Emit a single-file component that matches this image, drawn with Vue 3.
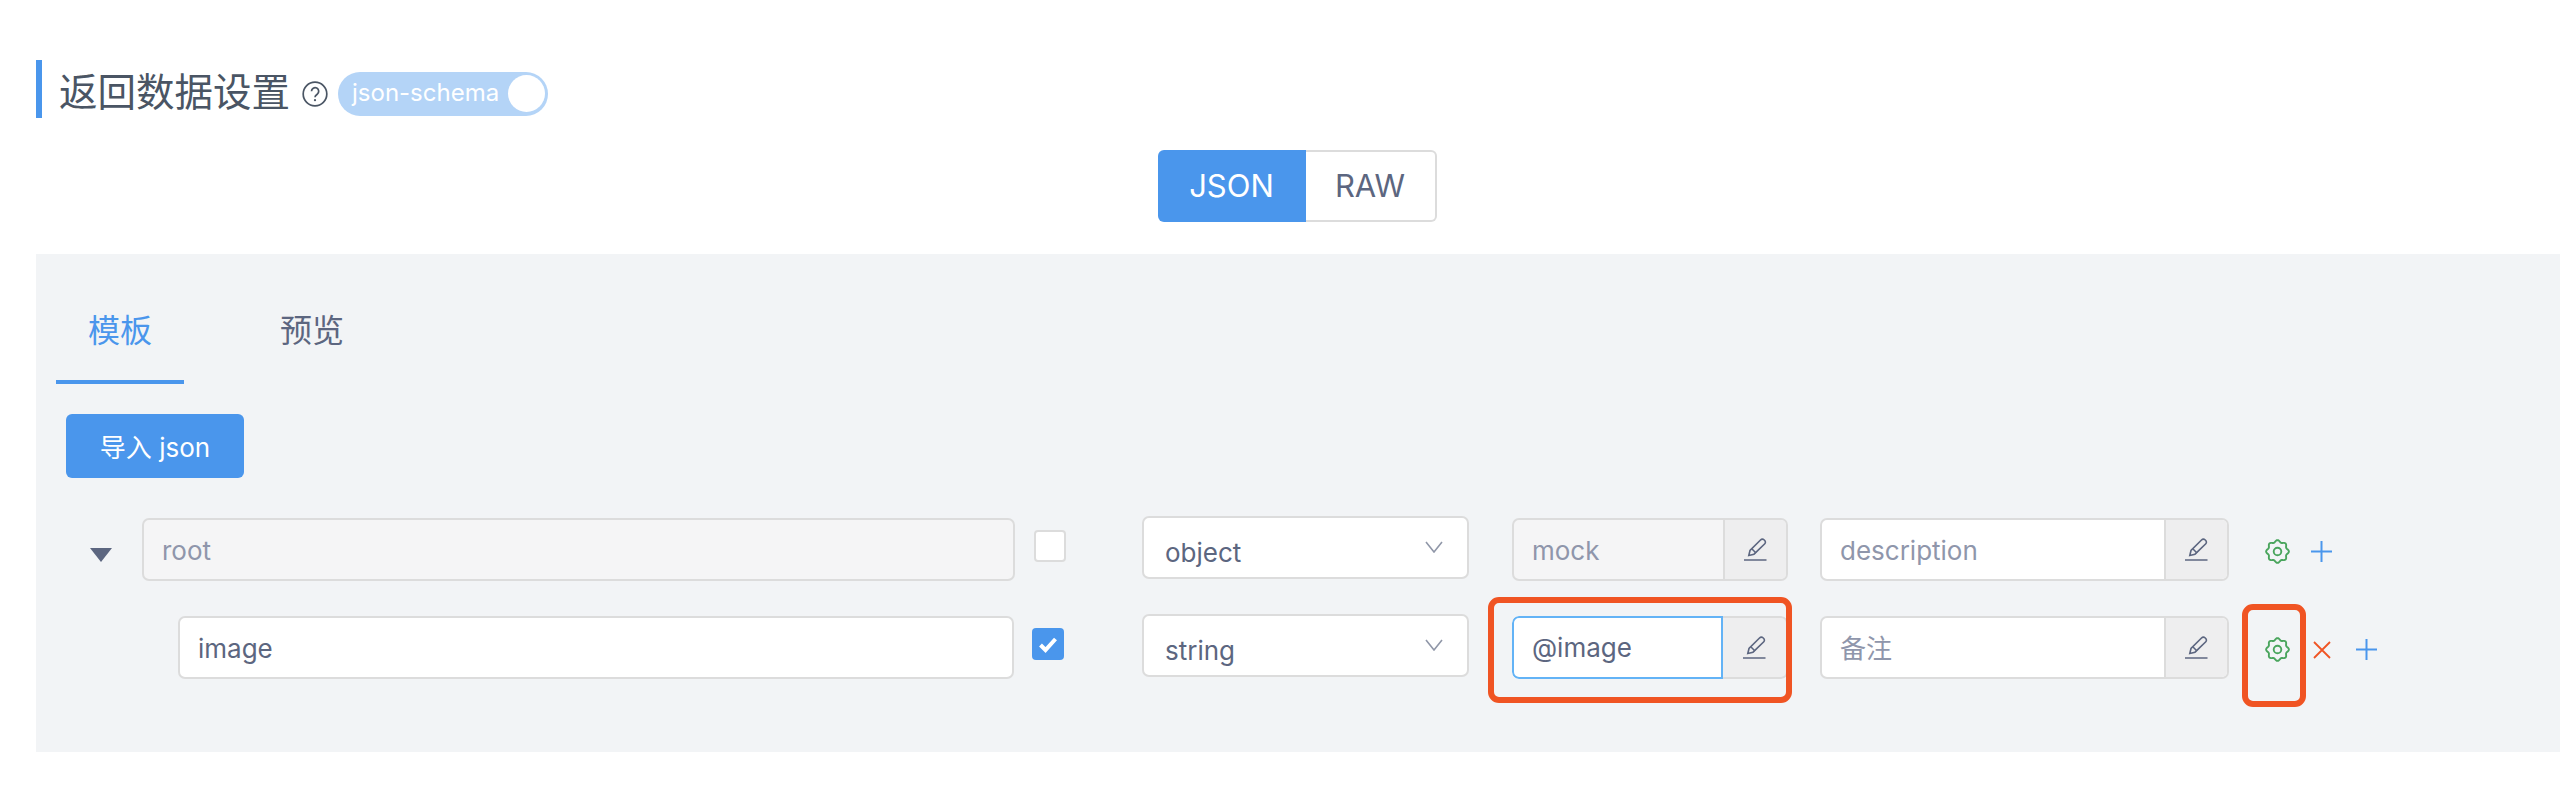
<script setup>
const lobes = 8
const pts = []
for (let i = 0; i < 96; i++) {
  const t = (i / 96) * Math.PI * 2
  const r = 10.4 + 1 * Math.cos(lobes * t)
  pts.push(`${(12.5 + r * Math.sin(t)).toFixed(2)} ${(12.5 - r * Math.cos(t)).toFixed(2)}`)
}
const gearPath = 'M' + pts.join('L') + 'Z'
</script>

<template>
  <div class="page">
    <div class="heading">
      <h2 class="title">返回数据设置</h2>
      <svg class="help" viewBox="0 0 26 26" aria-hidden="true">
        <circle cx="13" cy="13" r="11.8" />
        <path d="M9.5 10.2a3.6 3.6 0 1 1 5.7 3c-1.3.9-2.2 1.6-2.2 3.1" />
        <circle class="dot" cx="13" cy="19.2" r="1.1" />
      </svg>
      <div class="switch">
        <span class="switch-text">json-schema</span>
        <span class="knob"></span>
      </div>
    </div>

    <div class="segment-wrap">
      <div class="segment">
        <span class="seg seg-on">JSON</span>
        <span class="seg seg-off">RAW</span>
      </div>
    </div>

    <section class="panel">
      <div class="tabs">
        <span class="tab tab-active">模板</span>
        <span class="tab">预览</span>
      </div>
      <button class="import">导入 json</button>

      <div class="row row-root">
        <span class="caret"></span>
        <div class="field field-root disabled"><span class="ph">root</span></div>
        <span class="check"></span>
        <div class="select">
          <span>object</span>
          <svg class="chev" viewBox="0 0 18 12"><path d="M1 1l8 10 8-10" /></svg>
        </div>
        <div class="group group-mock disabled">
          <span class="group-text ph">mock</span>
          <span class="addon">
            <svg class="pen" viewBox="0 0 23 23"><path d="M4.8 17.5l1.2-5L16.5 2c1-1 2.6-1 3.8 0s1.5 2.8.5 3.8L10 16.2z" /><path d="M8 11l4 4" /><path d="M0 22h22.5" /></svg>
          </span>
        </div>
        <div class="group group-desc">
          <span class="group-text ph">description</span>
          <span class="addon">
            <svg class="pen" viewBox="0 0 23 23"><path d="M4.8 17.5l1.2-5L16.5 2c1-1 2.6-1 3.8 0s1.5 2.8.5 3.8L10 16.2z" /><path d="M8 11l4 4" /><path d="M0 22h22.5" /></svg>
          </span>
        </div>
        <svg class="gear" viewBox="0 0 25 25"><path :d="gearPath" /><circle cx="12.5" cy="12.5" r="3.8" /></svg>
        <svg class="plus plus-root" viewBox="0 0 21 21"><path d="M10.5 0v21M0 10.5h21" /></svg>
      </div>

      <div class="row row-child">
        <div class="field field-child"><span>image</span></div>
        <span class="check check-on">
          <svg viewBox="0 0 32 32"><path d="M8.5 17l5 5 10-11" /></svg>
        </span>
        <div class="select">
          <span>string</span>
          <svg class="chev" viewBox="0 0 18 12"><path d="M1 1l8 10 8-10" /></svg>
        </div>
        <div class="group group-mock group-focus">
          <span class="group-text focused">@image</span>
          <span class="addon">
            <svg class="pen" viewBox="0 0 23 23"><path d="M4.8 17.5l1.2-5L16.5 2c1-1 2.6-1 3.8 0s1.5 2.8.5 3.8L10 16.2z" /><path d="M8 11l4 4" /><path d="M0 22h22.5" /></svg>
          </span>
        </div>
        <div class="group group-desc">
          <span class="group-text ph">备注</span>
          <span class="addon">
            <svg class="pen" viewBox="0 0 23 23"><path d="M4.8 17.5l1.2-5L16.5 2c1-1 2.6-1 3.8 0s1.5 2.8.5 3.8L10 16.2z" /><path d="M8 11l4 4" /><path d="M0 22h22.5" /></svg>
          </span>
        </div>
        <svg class="gear" viewBox="0 0 25 25"><path :d="gearPath" /><circle cx="12.5" cy="12.5" r="3.8" /></svg>
        <svg class="close" viewBox="0 0 18 18"><path d="M1 1l16 16M17 1L1 17" /></svg>
        <svg class="plus plus-child" viewBox="0 0 21 21"><path d="M10.5 0v21M0 10.5h21" /></svg>
      </div>

      <span class="mark mark-mock"></span>
      <span class="mark mark-gear"></span>
    </section>
  </div>
</template>

<style>
html, body { margin: 0; background: #fff; }
</style>

<style scoped>
.page {
  width: 2572px;
  height: 808px;
  overflow: hidden;
  padding-top: 60px;
  box-sizing: border-box;
  font-family: Inter, "Noto Sans CJK SC", sans-serif;
  color: #5c6680;
}
.heading {
  display: flex;
  align-items: center;
  height: 58px;
  margin-left: 36px;
  padding-left: 17px;
  border-left: 6px solid #4a96ec;
}
.title {
  margin: 0;
  font-size: 38.5px;
  line-height: 58px;
  font-weight: 400;
  color: #4a5564;
  font-family: "Noto Sans CJK SC", sans-serif;
}
.help {
  width: 26px;
  height: 26px;
  margin-left: 12px;
  margin-top: 10px;
  fill: none;
  stroke: #4a5564;
  stroke-width: 1.7;
}
.help .dot { fill: #4a5564; stroke: none; }
.switch {
  position: relative;
  width: 210px;
  height: 44px;
  margin-left: 10px;
  margin-top: 10px;
  border-radius: 22px;
  background: #b4d4f7;
}
.switch-text {
  position: absolute;
  left: 14px;
  top: 0;
  line-height: 42px;
  font-size: 24px;
  color: #fff;
}
.knob {
  position: absolute;
  right: 3px;
  top: 3px;
  width: 37px;
  height: 37px;
  border-radius: 50%;
  background: #fff;
}
.segment-wrap {
  display: flex;
  justify-content: center;
  margin-top: 32px;
  padding-left: 22px;
}
.segment {
  display: flex;
  height: 72px;
  width: 279px;
  box-sizing: border-box;
  font-size: 31px;
  line-height: 72px;
}
.seg { text-align: center; box-sizing: border-box; }
.seg-on {
  width: 148px;
  background: #4a96ec;
  color: #fff;
  border-radius: 6px 0 0 6px;
}
.seg-off {
  width: 131px;
  background: #fff;
  border: 2px solid #dcdcdc;
  border-left: 0;
  line-height: 68px;
  border-radius: 0 6px 6px 0;
}
.panel {
  position: relative;
  margin: 32px 0 0 36px;
  width: 2524px;
  height: 498px;
  padding-top: 52px;
  box-sizing: border-box;
  background: #f2f4f6;
}
.tabs { display: flex; margin-left: 20px; gap: 64px; }
.tab {
  width: 128px;
  height: 74px;
  text-align: center;
  font-size: 32px;
  line-height: 44px;
  font-family: "Noto Sans CJK SC", sans-serif;
}
.tab-active { color: #4a96ec; border-bottom: 4px solid #4a96ec; }
.import {
  display: block;
  width: 178px;
  height: 64px;
  margin: 30px 0 0 30px;
  padding: 0 0 2px;
  border: 0;
  border-radius: 6px;
  background: #4a96ec;
  color: #fff;
  font: 26px Inter, "Noto Sans CJK SC", sans-serif;
}
.row { display: flex; align-items: flex-start; height: 98px; }
.row-root { margin-top: 38px; }
.caret {
  width: 0;
  height: 0;
  margin: 32px 0 0 54px;
  border-left: 11px solid transparent;
  border-right: 11px solid transparent;
  border-top: 14px solid #5c6680;
}
.field, .select, .group {
  box-sizing: border-box;
  height: 63px;
  border: 2px solid #dcdcdc;
  border-radius: 7px;
  background: #fff;
  font-size: 26px;
}
.field { margin-top: 2px; padding-left: 18px; line-height: 62px; }
.field-root { margin-left: 30px; width: 873px; }
.field-child { margin-left: 142px; width: 836px; }
.disabled { background: #f5f5f6; }
.ph { color: #8f96ab; }
.check {
  box-sizing: border-box;
  width: 32px;
  height: 32px;
  margin: 14px 0 0 19px;
  border: 2px solid #dcdcdc;
  border-radius: 4px;
  background: #fff;
}
.check-on {
  margin-left: 18px;
  border: 0;
  background: #4a96ec;
}
.check-on svg {
  display: block;
  fill: none;
  stroke: #fff;
  stroke-width: 4;
}
.select {
  position: relative;
  width: 327px;
  margin-left: 76px;
  padding: 13px 0 0 21px;
  line-height: 44px;
}
.row-child .select { margin-left: 78px; }
.chev {
  position: absolute;
  right: 24px;
  top: 23px;
  width: 18px;
  height: 12px;
  fill: none;
  stroke: #9097a8;
  stroke-width: 1.6;
}
.group {
  display: flex;
  margin-top: 2px;
  overflow: hidden;
  line-height: 62px;
}
.group-mock { margin-left: 43px; width: 276px; }
.group-desc { margin-left: 32px; width: 409px; }
.group-text {
  flex: 1;
  min-width: 0;
  padding-left: 18px;
}
.addon {
  display: flex;
  flex: none;
  align-items: center;
  justify-content: center;
  width: 63px;
  box-sizing: border-box;
  border-left: 2px solid #dcdcdc;
  background: #eeeeef;
}
.group-focus {
  border: 0;
  background: transparent;
}
.group-focus .focused {
  box-sizing: border-box;
  padding-left: 18px;
  line-height: 60px;
  border: 2px solid #63b3f6;
  border-radius: 7px 0 0 7px;
  background: #fff;
}
.group-focus .addon {
  width: 65px;
  border: 2px solid #dcdcdc;
  border-left: 0;
  border-radius: 0 7px 7px 0;
}
.pen {
  width: 23px;
  height: 23px;
  fill: none;
  stroke: #5c6680;
  stroke-width: 1.6;
}
.gear {
  width: 25px;
  height: 25px;
  margin: 23px 0 0 36px;
  fill: none;
  stroke: #4aa55d;
  stroke-width: 1.9;
}
.plus {
  width: 21px;
  height: 21px;
  margin-top: 25px;
  fill: none;
  stroke: #4a96ec;
  stroke-width: 2;
}
.plus-root { margin-left: 21px; }
.close {
  width: 18px;
  height: 18px;
  margin: 27px 0 0 23px;
  fill: none;
  stroke: #f05423;
  stroke-width: 1.8;
}
.plus-child { margin-left: 25px; }
.mark {
  position: absolute;
  box-sizing: border-box;
  border: 6px solid #f05423;
  border-radius: 11px;
}
.mark-mock { left: 1452px; top: 343px; width: 304px; height: 106px; }
.mark-gear { left: 2206px; top: 350px; width: 64px; height: 103px; }
</style>
